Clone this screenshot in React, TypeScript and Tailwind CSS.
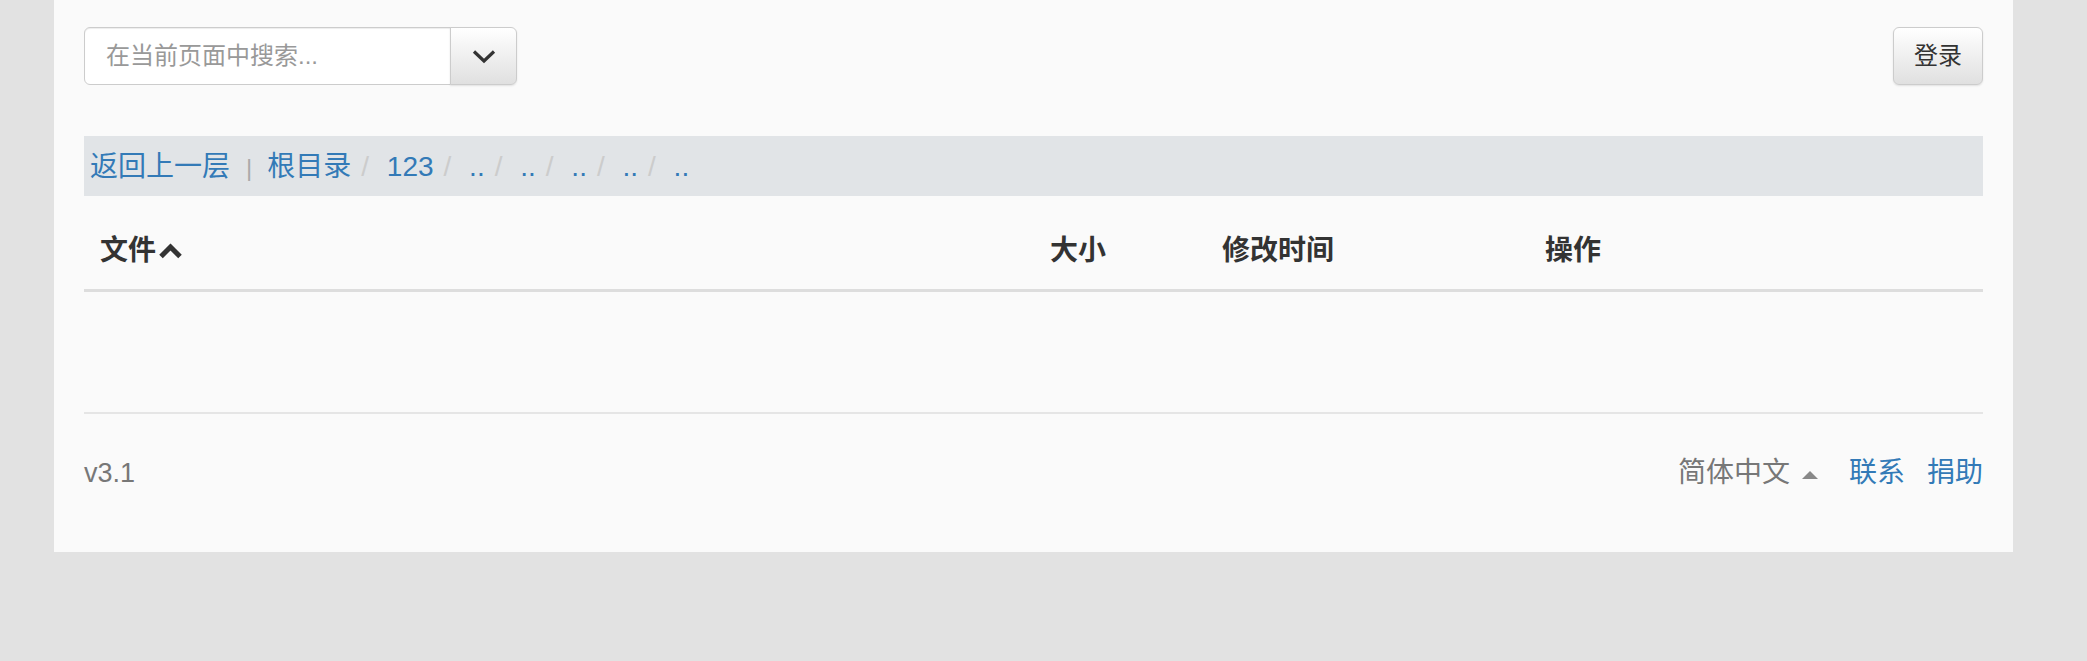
import { useState } from "react";

const crumbs = ["123", "..", "..", "..", "..", ".."];

const columns = [
  { title: "大小" },
  { title: "修改时间" },
  { title: "操作" },
];

const App = () => {
  const [query, setQuery] = useState("");

  return (
    <div className="min-h-[661px] bg-[#e2e2e2] font-['Liberation_Sans','Noto_Sans_CJK_SC',sans-serif]">
      <div className="ml-[54px] w-[1959px] bg-[#fafafa] px-[30px] pt-[27px] pb-[60px]">
        {/* search + login */}
        <div className="flex h-[58px] items-stretch justify-between">
          <div className="flex w-[433px]">
            <input
              value={query}
              onChange={(e) => setQuery(e.target.value)}
              placeholder="在当前页面中搜索..."
              className="min-w-0 flex-1 rounded-l-[6px] border border-[#ccc] bg-white pl-[21px] text-[24px] text-[#555] shadow-[inset_0_1px_1px_rgba(0,0,0,0.075)] outline-none placeholder:text-[#999]"
            />
            <button className="-ml-px flex w-[67px] items-center justify-center rounded-r-[6px] border border-[#ccc] bg-linear-to-b from-white to-[#e0e0e0] shadow-[0_1px_2px_rgba(0,0,0,0.1)]">
              <svg width="24" height="15" viewBox="0 0 24 15">
                <polyline
                  points="2,2.5 12,12 22,2.5"
                  fill="none"
                  stroke="#333"
                  strokeWidth="3.2"
                />
              </svg>
            </button>
          </div>
          <button className="w-[90px] rounded-[6px] border border-[#ccc] bg-linear-to-b from-white to-[#e0e0e0] text-[24px] text-[#333] shadow-[0_1px_2px_rgba(0,0,0,0.1)]">
            登录
          </button>
        </div>

        {/* breadcrumb */}
        <div className="mt-[51px] flex h-[60px] items-center bg-[#e1e4e7] pl-[6px]">
          <div className="flex items-baseline pt-[3px] text-[28px] leading-[40px]">
            <a className="text-[#337ab7]">返回上一层</a>
            <span className="ml-[16px] mr-[15px] text-[24px] text-[#aaa]">|</span>
            <a className="text-[#337ab7]">根目录</a>
            {crumbs.map((c, i) => (
              <span key={i} className="flex items-baseline">
                <span className="px-[10px] text-[#ccc]">/{"\u00a0"}</span>
                <a className="text-[#337ab7]">{c}</a>
              </span>
            ))}
          </div>
        </div>

        {/* table header */}
        <div className="grid grid-cols-[950px_172px_323px_1fr] border-b-[3px] border-[#ddd] text-[28px] font-bold leading-[38px] text-[#333]">
          <div className="flex items-center px-[16px] pt-[36px] pb-[19px]">
            文件
            <svg width="25" height="16" viewBox="0 0 25 16" className="ml-[2px]">
              <polyline
                points="3,13.5 12.5,4 22,13.5"
                fill="none"
                stroke="#333"
                strokeWidth="5"
              />
            </svg>
          </div>
          {columns.map((col) => (
            <div key={col.title} className="px-[16px] pt-[36px] pb-[19px]">
              {col.title}
            </div>
          ))}
        </div>

        <div className="h-[120px]" />
        <div className="h-[2px] bg-[#e5e5e5]" />

        {/* footer */}
        <div className="mt-[40px] flex items-center justify-between leading-[38px]">
          <span className="text-[27px] text-[#777]">v3.1</span>
          <div className="flex items-center text-[28px]">
            <span className="text-[#777]">简体中文</span>
            <span className="ml-[12px] mt-[4px] h-0 w-0 border-x-[8px] border-b-[8px] border-x-transparent border-b-[#888]" />
            <a className="ml-[31px] text-[#337ab7]">联系</a>
            <a className="ml-[22px] text-[#337ab7]">捐助</a>
          </div>
        </div>
      </div>
    </div>
  );
};

export default App;
